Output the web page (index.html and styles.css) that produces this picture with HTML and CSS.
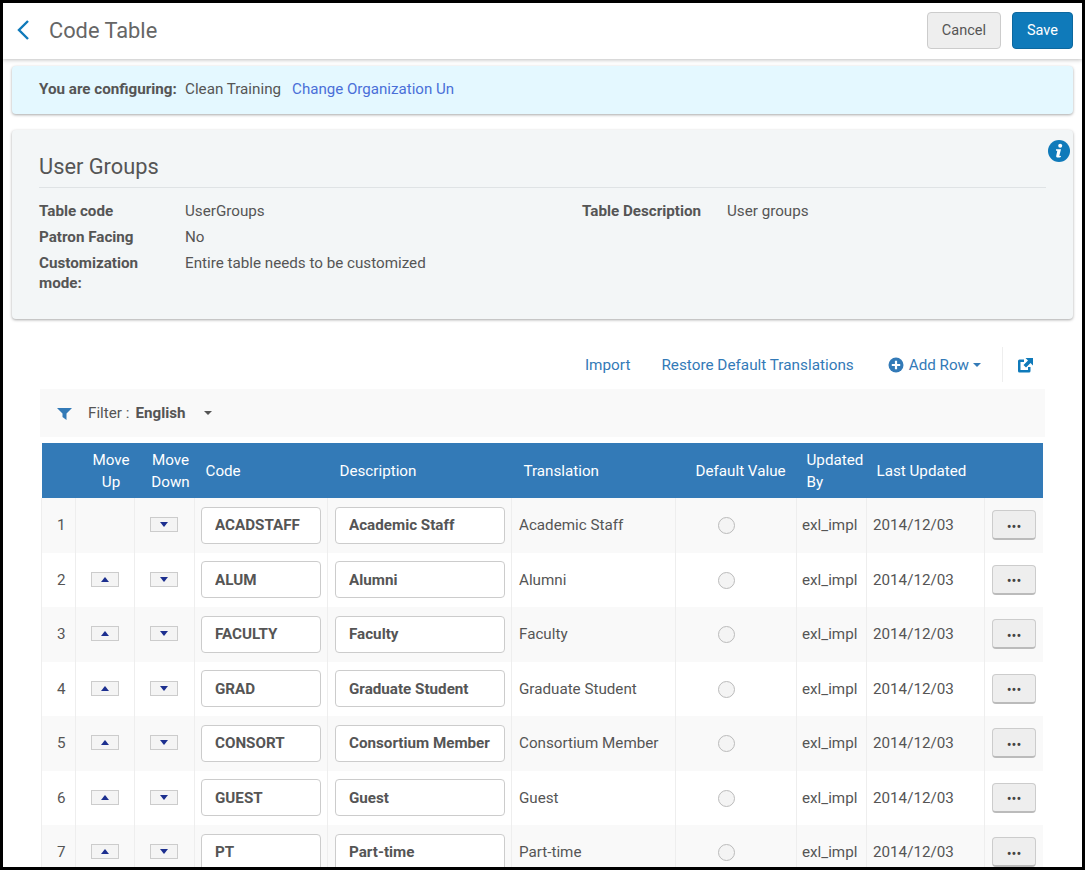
FILE: index.html
```html
<!DOCTYPE html>
<html lang="en">
<head>
    <meta charset="UTF-8">
    <title>Code Table</title>
    <link rel="stylesheet" href="styles.css">
</head>
<body>
    <div class="frame">
        <header class="topbar">
            <svg class="back" width="14" height="22" viewBox="0 0 14 22"><path d="M12 2 L3 11 L12 20" fill="none" stroke="#0f7aba" stroke-width="2.4"/></svg>
            <h1>Code Table</h1>
            <button class="btn">Cancel</button>
            <button class="btn primary">Save</button>
        </header>

        <div class="org-panel">
            <b class="org-label">You are configuring:</b>
            <span class="org-name">Clean Training</span>
            <a class="org-link">Change Organization Un</a>
        </div>

        <section class="info-panel">
            <svg class="info-icon" width="22" height="22" viewBox="0 0 22 22">
                <circle cx="11" cy="11" r="11" fill="#0f7aba"/>
                <circle cx="12.2" cy="5.8" r="2" fill="#fff"/>
                <path d="M8 9.2h5l-1.6 6.4c-.1.5.3.6 1.6.2l-.2 1.1c-1.400.9-5 1.300-4.600-.9l1.100-5.200H8z" fill="#fff"/>
            </svg>
            <h2>User Groups</h2>
            <div class="details">
                <div class="details-col">
                    <div class="detail"><label>Table code</label><span>UserGroups</span></div>
                    <div class="detail"><label>Patron Facing</label><span>No</span></div>
                    <div class="detail"><label>Customization mode:</label><span>Entire table needs to be customized</span></div>
                </div>
                <div class="details-col">
                    <div class="detail"><label>Table Description</label><span>User groups</span></div>
                </div>
            </div>
        </section>

        <div class="actions">
            <a class="import">Import</a>
            <a class="restore">Restore Default Translations</a>
            <a class="add-row">
                <svg width="16" height="16" viewBox="0 0 16 16"><circle cx="8" cy="8" r="7.500" fill="#337ab7"/><path d="M8 3.800v8.400M3.800 8h8.400" stroke="#fff" stroke-width="2.200"/></svg>
                Add Row <i class="caret"></i>
            </a>
            <span class="export">
                <svg width="16" height="16" viewBox="0 0 16 16"><path d="M7 2.500H2.500A1.500 1.500 0 0 0 1 4v10a1.500 1.500 0 0 0 1.500 1.500h9.500a1.500 1.500 0 0 0 1.500-1.500V10h-2.500v3H3.500V5H7z" fill="#0f7aba"/><path d="M8.500 1H16v7.500l-2.500-2.500L9 10.500 6.500 8l4.500-4.500z" fill="#0f7aba"/></svg>
            </span>
        </div>

        <div class="filter-bar">
            <svg width="15" height="13" viewBox="0 0 15 13"><path d="M0 1h15L9.500 6.500V13L5.500 10V6.500z" fill="#337ab7"/></svg>
            <span class="filter-label">Filter :</span>
            <b>English</b>
            <i class="caret dark"></i>
        </div>

        <table class="codes">
            <thead>
                <tr>
                    <th class="c-num"></th>
                    <th class="c-move center">Move Up</th>
                    <th class="c-move2 center">Move Down</th>
                    <th class="c-code">Code</th>
                    <th class="c-desc">Description</th>
                    <th class="c-trans">Translation</th>
                    <th class="c-def">Default Value</th>
                    <th class="c-by">Updated By</th>
                    <th class="c-date">Last Updated</th>
                    <th class="c-more"></th>
                </tr>
            </thead>
            <tbody>
                <tr>
                    <td class="num">1</td><td></td>
                    <td class="move-down"><span class="mv down"></span></td>
                    <td class="code"><input class="cell-input" value="ACADSTAFF"></td>
                    <td class="desc"><input class="cell-input" value="Academic Staff"></td>
                    <td class="trans">Academic Staff</td>
                    <td class="def"><span class="radio"></span></td>
                    <td class="by">exl_impl</td><td class="date">2014/12/03</td>
                    <td class="act"><button class="more">•••</button></td>
                </tr>
                <tr>
                    <td class="num">2</td>
                    <td class="center"><span class="mv up"></span></td>
                    <td class="move-down"><span class="mv down"></span></td>
                    <td class="code"><input class="cell-input" value="ALUM"></td>
                    <td class="desc"><input class="cell-input" value="Alumni"></td>
                    <td class="trans">Alumni</td>
                    <td class="def"><span class="radio"></span></td>
                    <td class="by">exl_impl</td><td class="date">2014/12/03</td>
                    <td class="act"><button class="more">•••</button></td>
                </tr>
                <tr>
                    <td class="num">3</td>
                    <td class="center"><span class="mv up"></span></td>
                    <td class="move-down"><span class="mv down"></span></td>
                    <td class="code"><input class="cell-input" value="FACULTY"></td>
                    <td class="desc"><input class="cell-input" value="Faculty"></td>
                    <td class="trans">Faculty</td>
                    <td class="def"><span class="radio"></span></td>
                    <td class="by">exl_impl</td><td class="date">2014/12/03</td>
                    <td class="act"><button class="more">•••</button></td>
                </tr>
                <tr>
                    <td class="num">4</td>
                    <td class="center"><span class="mv up"></span></td>
                    <td class="move-down"><span class="mv down"></span></td>
                    <td class="code"><input class="cell-input" value="GRAD"></td>
                    <td class="desc"><input class="cell-input" value="Graduate Student"></td>
                    <td class="trans">Graduate Student</td>
                    <td class="def"><span class="radio"></span></td>
                    <td class="by">exl_impl</td><td class="date">2014/12/03</td>
                    <td class="act"><button class="more">•••</button></td>
                </tr>
                <tr>
                    <td class="num">5</td>
                    <td class="center"><span class="mv up"></span></td>
                    <td class="move-down"><span class="mv down"></span></td>
                    <td class="code"><input class="cell-input" value="CONSORT"></td>
                    <td class="desc"><input class="cell-input" value="Consortium Member"></td>
                    <td class="trans">Consortium Member</td>
                    <td class="def"><span class="radio"></span></td>
                    <td class="by">exl_impl</td><td class="date">2014/12/03</td>
                    <td class="act"><button class="more">•••</button></td>
                </tr>
                <tr>
                    <td class="num">6</td>
                    <td class="center"><span class="mv up"></span></td>
                    <td class="move-down"><span class="mv down"></span></td>
                    <td class="code"><input class="cell-input" value="GUEST"></td>
                    <td class="desc"><input class="cell-input" value="Guest"></td>
                    <td class="trans">Guest</td>
                    <td class="def"><span class="radio"></span></td>
                    <td class="by">exl_impl</td><td class="date">2014/12/03</td>
                    <td class="act"><button class="more">•••</button></td>
                </tr>
                <tr>
                    <td class="num">7</td>
                    <td class="center"><span class="mv up"></span></td>
                    <td class="move-down"><span class="mv down"></span></td>
                    <td class="code"><input class="cell-input" value="PT"></td>
                    <td class="desc"><input class="cell-input" value="Part-time"></td>
                    <td class="trans">Part-time</td>
                    <td class="def"><span class="radio"></span></td>
                    <td class="by">exl_impl</td><td class="date">2014/12/03</td>
                    <td class="act"><button class="more">•••</button></td>
                </tr>
            </tbody>
        </table>
    </div>
</body>
</html>
```
FILE: styles.css
```css
* {
    box-sizing: border-box;
}
html, body {
    margin: 0;
    height: 100%;
    overflow: hidden;
}
body {
    font-family: Roboto, sans-serif;
    font-size: 15.2px;
    color: #555;
}
.frame {
    width: 1085px;
    height: 870px;
    border: 3px solid #000;
    background: #fff;
    overflow: hidden;
}
.topbar {
    display: flex;
    align-items: center;
    height: 56px;
    padding: 0 9px 2px 13px;
    background: #fff;
    box-shadow: 0 1px 4px rgba(0,0,0,0.25);
}
.back {
    margin-right: 19px;
}
h1 {
    flex: 1;
    margin: 0;
    font-size: 21.800px;
    font-weight: 400;
    color: #666;
}
.btn {
    height: 37px;
    padding: 0 14px;
    margin-left: 11px;
    font: 14.5px Roboto, sans-serif;
    color: #555;
    background: #eee;
    border: 1px solid #ccc;
    border-radius: 4px;
}
.btn.primary {
    color: #fff;
    background: #0f7aba;
    border-color: #0c689f;
}
.org-panel {
    display: flex;
    align-items: center;
    height: 48px;
    margin: 7px 9px 0;
    padding: 0 0 3px 27px;
    background: #e4f8ff;
    border-radius: 4px;
    box-shadow: 0 1px 3px rgba(0,0,0,0.35);
}
.org-label {
    width: 146px;
}
.org-link {
    margin: 1px 0 0 11px;
    font-size: 15.100px;
    color: #4a6fd8;
}
.info-panel {
    position: relative;
    height: 189px;
    margin: 16px 9px 0;
    padding: 24px 27px 0;
    background: #f3f6f7;
    border-radius: 4px;
    box-shadow: 0 1px 3px rgba(0,0,0,0.35);
}
.info-icon {
    position: absolute;
    top: 10px;
    right: 3px;
}
h2 {
    margin: 0;
    padding-bottom: 8px;
    font-size: 21.800px;
    font-weight: 400;
    color: #555;
    border-bottom: 1px solid #dfe3e5;
}
.details {
    display: flex;
    margin-top: 13px;
}
.details-col {
    flex: none;
    width: 543px;
}
.details-col + .details-col {
    width: 464px;
}
.detail {
    display: flex;
    margin-bottom: 6px;
    line-height: 20px;
}
.detail label {
    flex: none;
    width: 146px;
    padding-right: 20px;
    font-weight: 700;
}
.details-col + .details-col .detail label {
    width: 145px;
}
.actions {
    display: flex;
    justify-content: flex-end;
    align-items: center;
    height: 35px;
    margin: 28px 49px 0 0;
    font-size: 15.300px;
    color: #337ab7;
}
.import {
    margin-right: 31px;
}
.restore {
    margin-right: 34px;
}
.add-row {
    display: flex;
    align-items: center;
    gap: 5px;
    margin-right: 21px;
    font-size: 15.200px;
}
.add-row .caret {
    margin-left: -1px;
}
.export {
    display: flex;
    align-items: center;
    height: 35px;
    padding-left: 14px;
    border-left: 1px solid #eee;
}
.caret {
    display: inline-block;
    width: 0;
    height: 0;
    border-left: 4px solid transparent;
    border-right: 4px solid transparent;
    border-top: 4px solid #337ab7;
}
.caret.dark {
    margin-left: 18px;
    border-top-color: #555;
}
.filter-bar {
    display: flex;
    align-items: center;
    height: 48px;
    margin: 7px 37px 0 37px;
    padding-left: 17px;
    background: #f9f9f9;
}
.filter-label {
    margin: 0 6px 0 16px;
}
.codes {
    width: 1001px;
    margin: 6px 0 0 38px;
    border-collapse: collapse;
    table-layout: fixed;
}
.codes th {
    height: 55px;
    padding: 1px 5px 0;
    font-weight: 400;
    line-height: 22px;
    text-align: left;
    color: #fff;
    background: #337ab7;
}
.codes th.center {
    text-align: center;
    padding: 0 0 0 12px;
}
.codes td {
    height: 54.500px;
    padding: 0 8px;
    border-left: 1px solid #eee;
}
.codes tbody tr:nth-child(odd) {
    background: #f9f9f9;
}
.codes td.center {
    text-align: center;
}
.c-num { width: 34px; }
.c-move { width: 59px; }
.c-move2 { width: 60px; }
.c-code { width: 133px; padding-left: 11px !important; }
.c-desc { width: 184px; padding-left: 12px !important; }
.c-trans { width: 164px; padding-left: 12px !important; }
.c-def { width: 121px; padding-left: 20px !important; }
.c-by { width: 70px; padding-left: 10px !important; }
.c-date { width: 118px; padding-left: 10px !important; }
.c-more { width: 58px; }
.codes td.num {
    padding-left: 15px;
}
.codes td.move-down {
    padding: 0 0 0 15px;
}
.codes td.code {
    padding: 0 6px;
}
.codes td.desc {
    padding: 0 6px 0 7px;
}
.codes td.trans {
    padding: 0 0 0 7px;
}
.codes td.def {
    padding: 0 0 0 42px;
}
.codes td.by {
    padding: 0 0 0 5px;
}
.codes td.date {
    padding: 0 0 0 6px;
}
.codes td.act {
    padding: 0 0 0 7px;
}
.cell-input {
    display: block;
    width: 100%;
    height: 37px;
    padding: 0 13px;
    font: 700 15.2px Roboto, sans-serif;
    color: #555;
    background: #fff;
    border: 1px solid #ccc;
    border-radius: 4px;
}
.mv {
    display: inline-flex;
    justify-content: center;
    align-items: center;
    width: 28px;
    height: 15px;
    vertical-align: 3px;
    background: #f4f4f4;
    border: 1px solid #ccc;
}
.mv::after {
    content: "";
    border-left: 4px solid transparent;
    border-right: 4px solid transparent;
}
.mv.up::after {
    border-bottom: 5px solid #1c2f8f;
}
.mv.down::after {
    border-top: 5px solid #1c2f8f;
}
.radio {
    display: inline-block;
    width: 17px;
    height: 17px;
    vertical-align: middle;
    background: #f4f4f4;
    border: 1px solid #bbb;
    border-radius: 50%;
}
.more {
    display: block;
    width: 44px;
    height: 30px;
    padding: 5px 0 0;
    font: 14.500px Roboto, sans-serif;
    color: #444;
    background: #eee;
    border: 1px solid #ccc;
    border-bottom: 2px solid #bbb;
    border-radius: 4px;
}
```
